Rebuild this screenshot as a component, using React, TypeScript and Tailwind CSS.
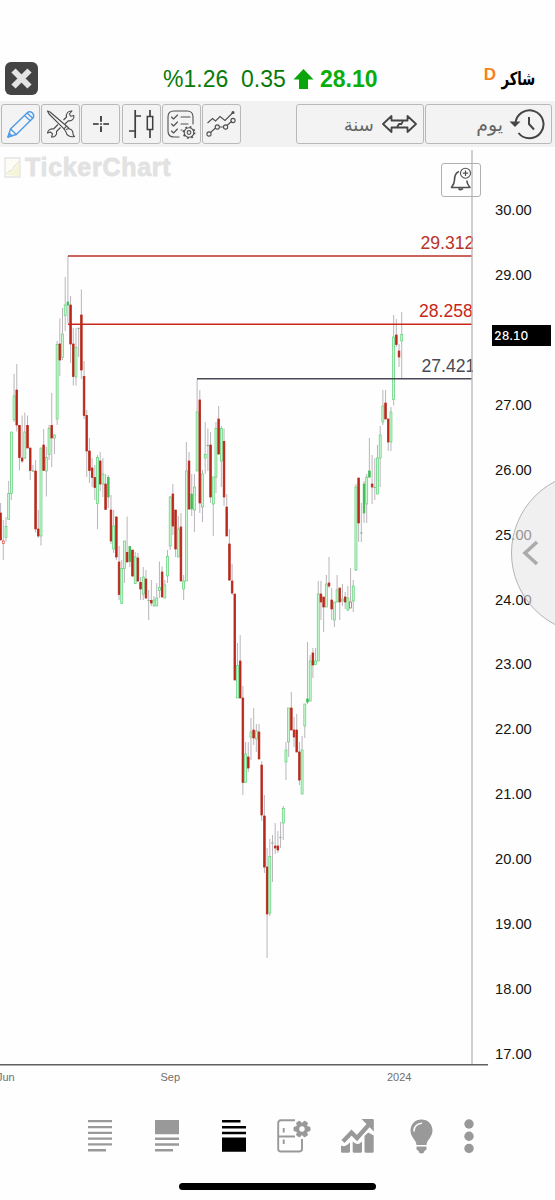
import type { ReactNode } from 'react';

type Kind = 'r' | 'g' | 'G' | 'h' | 'd';

// kind, high, body top, body bottom, low
type Candle = [Kind, number, number, number, number];

// r = falling, g = rising, G = rising filled, h = falling hollow, d = doji
const CANDLES: Candle[] = [
  ['r', 503, 513, 540, 540], ['h', 520, 541, 543.5, 560], ['g', 517, 526.5, 537.5, 541.5],
  ['g', 481, 493.5, 519.5, 519.5], ['g', 432, 432, 493.5, 500], ['g', 374, 396, 419.5, 422],
  ['r', 364, 390, 425, 431.5], ['r', 425, 425.5, 457.5, 470.5], ['r', 415.5, 458, 461, 463],
  ['g', 412.5, 432, 458, 459], ['r', 415.5, 425.5, 448, 448], ['r', 448, 448, 470.5, 480],
  ['d', 465, 470.5, 471.5, 472], ['r', 460, 471, 529, 532.5], ['r', 510, 529, 536, 538],
  ['g', 448, 448, 536, 545.5], ['r', 429, 445, 470.5, 471], ['g', 447, 457.5, 471, 496.5],
  ['g', 425, 428.5, 454.5, 460], ['r', 393, 425.5, 438, 467], ['g', 434, 435, 438, 454],
  ['g', 341, 344.5, 419, 425], ['r', 318.5, 344, 360, 376], ['g', 308, 334, 357.5, 360],
  ['g', 277, 305, 315.5, 331], ['G', 256, 302, 305, 323], ['r', 296, 305, 344, 363],
  ['r', 328, 344, 376.5, 385.5], ['g', 328, 347.5, 377, 385.5], ['d', 327.5, 328, 329, 357],
  ['r', 289.5, 315, 370, 379], ['r', 361, 376.5, 415.5, 419], ['r', 410, 415.5, 451, 477],
  ['r', 438, 451, 470.5, 483], ['r', 458, 468, 477.5, 487], ['r', 465, 477.5, 487.5, 500],
  ['g', 455, 457.5, 503.5, 529], ['r', 452, 461, 484, 491], ['g', 458, 474, 484, 497],
  ['r', 474, 484, 509.5, 510], ['G', 475, 477.5, 497, 508], ['r', 495, 510, 541, 544],
  ['g', 510, 526, 549, 553], ['r', 516, 517, 557, 560], ['r', 546, 562, 594.5, 600],
  ['g', 560, 568.5, 603.5, 604], ['g', 541, 541, 568.5, 583], ['r', 516.5, 552.5, 562, 562],
  ['G', 546, 546.5, 561.5, 567], ['r', 550, 550, 576, 577], ['g', 552, 557, 583.5, 584],
  ['r', 553, 558, 581, 582], ['r', 577, 582.5, 589, 600], ['g', 567, 577, 594, 600],
  ['r', 570, 579, 598, 599], ['d', 590, 600, 601, 620], ['r', 580, 600.5, 603, 606],
  ['g', 596, 600, 605.5, 607], ['g', 583, 598, 606, 606], ['g', 561.5, 587.5, 590.5, 598],
  ['r', 566.5, 572, 597, 597], ['g', 580, 585, 598, 598], ['g', 550, 556.5, 576, 583],
  ['g', 496, 497, 546, 550], ['r', 484, 494, 526, 535], ['r', 510, 510, 549, 557],
  ['g', 516, 529, 557, 557], ['r', 513, 527, 581, 581], ['g', 575, 581, 589, 600],
  ['g', 442, 471, 581, 581], ['r', 452, 461, 509, 510], ['G', 474, 494, 509, 516],
  ['g', 474, 487, 510, 532], ['g', 379, 412, 471, 471], ['r', 390, 400, 503, 513],
  ['g', 470, 474, 507, 522], ['g', 422, 454.5, 458, 474], ['d', 428.5, 445, 446, 471],
  ['r', 432, 445, 497, 503], ['g', 477, 477, 504, 536], ['g', 422, 428.5, 477, 493],
  ['r', 406, 419, 454, 455], ['g', 426, 428.5, 461, 487], ['r', 428.5, 441.5, 497, 506],
  ['r', 494, 507, 536, 536], ['r', 529, 544, 580, 581], ['r', 564, 581, 593, 595],
  ['r', 594, 594, 680, 680], ['g', 643, 665.5, 698, 698], ['r', 635, 661, 698, 698],
  ['r', 686, 698, 782.5, 795], ['g', 742, 754, 782.5, 783], ['r', 742, 757, 768, 772],
  ['g', 718, 732, 737, 760], ['r', 708, 730, 738, 745], ['g', 724, 731, 739, 752],
  ['r', 724, 732, 759, 759], ['r', 761, 765, 815, 821], ['r', 795, 816, 867, 873],
  ['r', 848, 867, 914, 958], ['g', 839, 856.5, 913, 916], ['d', 835, 842.5, 843.5, 882],
  ['r', 823, 846, 848, 854], ['r', 831, 846, 850, 853], ['d', 822, 837, 838, 848],
  ['g', 806, 808.5, 823, 840], ['g', 742, 750, 762, 780], ['g', 708, 708, 742, 757],
  ['r', 692, 708, 730, 730], ['r', 717, 730, 737, 747], ['r', 714, 730, 752, 752],
  ['r', 742, 752, 780, 785], ['g', 736, 750, 794, 794], ['g', 704, 704, 726, 738],
  ['G', 642, 699, 702, 704], ['g', 655, 661, 701, 701], ['r', 648, 653, 665, 678],
  ['g', 648, 661, 664.5, 665], ['g', 581, 594, 661, 661], ['r', 581, 594, 602, 620],
  ['r', 597, 597, 607, 632], ['g', 575, 584, 607, 607], ['r', 557, 583, 586, 588],
  ['r', 588, 600, 609, 620], ['g', 602, 602, 620, 627], ['g', 575, 590, 602, 602],
  ['r', 588, 588, 602, 620], ['g', 584, 599, 601, 606], ['r', 592, 597, 602, 609],
  ['g', 586, 598, 610, 611], ['h', 568, 602, 608, 608], ['g', 580, 586, 601, 612],
  ['g', 484, 487, 570, 571], ['r', 478, 478, 523, 542], ['d', 503, 532.5, 533.5, 542],
  ['G', 481, 484, 513, 523], ['g', 474, 477, 504, 523], ['G', 438, 471, 477, 478],
  ['r', 455, 484, 487, 504], ['d', 458, 487, 488, 500], ['g', 445, 458, 494, 494],
  ['g', 426, 435, 458, 487], ['g', 390, 406, 422, 425], ['r', 390, 403, 419, 419],
  ['r', 419, 419, 442, 451], ['g', 407, 412, 442, 451], ['g', 315, 337, 399.5, 405.5],
  ['r', 319, 335, 344.5, 347], ['r', 344, 351, 357, 367], ['g', 312, 334.5, 341, 379],
];

const BODY: Record<Kind, { fill: string; stroke: string }> = {
  r: { fill: '#b8281a', stroke: '#b8281a' },
  g: { fill: '#cbf7d2', stroke: '#5fd07a' },
  G: { fill: '#3fbb54', stroke: '#3fbb54' },
  h: { fill: '#ffffff', stroke: '#cf4b40' },
  d: { fill: '#85b890', stroke: '#85b890' },
};

const LEVELS = [
  { label: '29.312', x: 68, labelX: 420.5, y: 256, color: '#b83229' },
  { label: '28.258', x: 68, labelX: 419, y: 324.3, color: '#c8261b' },
  { label: '27.421', x: 197, labelX: 421.5, y: 378.7, color: '#484b55' },
];

// 28.00 stays empty, the last price tag covers it
const PRICES = ['30.00', '29.00', '', '27.00', '26.00', '25.00', '24.00', '23.00', '22.00', '21.00', '20.00', '19.00', '18.00', '17.00'];

function Candles() {
  return (
    <g>
      {CANDLES.map(([kind, high, top, bottom, low], i) => {
        const x = 0.6 + i * 2.692;
        const w = kind === 'r' || kind === 'G' ? 1.7 : 2;
        return (
          <g key={i}>
            <line x1={x} x2={x} y1={high} y2={low} stroke="#b3adb3" strokeWidth="0.9" />
            <rect
              x={x - w / 2}
              y={top}
              width={w}
              height={bottom - top}
              fill={BODY[kind].fill}
              stroke={BODY[kind].stroke}
              strokeWidth={kind === 'd' ? 0.2 : 0.7}
            />
          </g>
        );
      })}
    </g>
  );
}

function ToolButton({ children }: { children: ReactNode }) {
  return (
    <button className="flex h-10 w-[39px] shrink-0 items-center justify-center rounded-[3px] border border-[#b9b9b9] bg-[#f3f3f3]">
      {children}
    </button>
  );
}

function PencilIcon() {
  return (
    <svg width="28" height="28" viewBox="0 0 28 28" fill="none" stroke="#4f9be6" strokeWidth="1.4" strokeLinejoin="round">
      <path d="M1 27 3.500 19 20 3Q22.500 .5 25.500 3Q28 6 25.500 8.500L9.300 24.500Z" />
      <path d="m3.500 19 5.800 5.500M17.500 5.500l6 5.500M20 3l6 5.500M1 27l1.300-3.800 2.500 2.500Z" />
    </svg>
  );
}

function ToolsIcon() {
  return (
    <svg width="30" height="30" viewBox="0 0 30 30" fill="none" stroke="#4b4b4b" strokeWidth="1.1" strokeLinejoin="round">
      <path d="M12 15.500 7.500 20c-3-.5-5.500 1-6 4l3-1 2 1.800-1 3.200c3.300.3 5.800-2.200 5-5.500l4-4M17.500 11l3-3c-.8-3.500 2-6.500 5.500-6l-2.700 3 1.500 2.300 3-.8c.8 3.500-2.300 6-5.300 5.200L19 15" />
      <path d="M1.500 2 4 3l16.500 14-2.500 2.800L3 5Z" />
      <path d="m20.500 17 3 3c2.500.3 3.500 2.500 3.500 5 0 1.300 1 2 1.500 2.500-4 .8-8-.5-8.500-4.500l-2-3.200M20 20.500l3-1" />
    </svg>
  );
}

function CrosshairIcon() {
  return (
    <svg width="16" height="16" viewBox="0 0 16 16" stroke="#2c2c2c" strokeWidth="1.7">
      <path d="M8 0v5.700M8 7.200v1.600M8 10.300V16M0 8h5.700M7.200 8h1.600M10.300 8H16" />
    </svg>
  );
}

function BarTypesIcon() {
  return (
    <svg width="26" height="30" viewBox="0 0 26 30" fill="none" stroke="#3f3f3f" strokeWidth="1.7">
      <path d="M7.200 1v28M7 7h6M1 22h6M22 1v6.500M22 20.500V29" />
      <path d="M19.300 7.500h5.400v13h-5.400z" strokeWidth="1.500" />
    </svg>
  );
}

function ChecklistIcon() {
  return (
    <svg width="30" height="30" viewBox="0 0 30 30" fill="none" stroke="#505050" strokeWidth="1.1" strokeLinecap="round" strokeLinejoin="round">
      <path d="M13 28H8Q2 28 2 22V8Q2 2 8 2h13q6 0 6 6v7" />
      <path d="m5.500 8 2 2 4-4M5.500 15l2 2 4-4M5.500 22l2 2 4-4M15 8h9M15 15h7M15 21h1" />
      <circle cx="23" cy="23.500" r="4.800" />
      <circle cx="23" cy="23.500" r="1.900" />
      <circle cx="23" cy="23.500" r="5.600" strokeWidth="1.700" strokeDasharray="1.800 2.600" strokeLinecap="butt" />
    </svg>
  );
}

function TrendsIcon() {
  return (
    <svg width="30" height="28" viewBox="0 0 30 28" fill="none" stroke="#505050" strokeWidth="1.1">
      <path d="m1.500 13 5-4.500 3 2.500 4.500-4.500 5 4L27 2.500" />
      <circle cx="27" cy="2.500" r="1" fill="#505050" />
      <path d="m4.500 22.500 5-4.500M13.500 17h4M21 15.500l5-4.500" />
      <circle cx="3" cy="24" r="2.100" />
      <circle cx="11.300" cy="17" r="2.100" />
      <circle cx="19.600" cy="17" r="2.100" />
      <circle cx="27" cy="10.500" r="2.100" />
    </svg>
  );
}

function RangeIcon() {
  return (
    <svg width="35" height="20" viewBox="0 0 35 20" fill="none" stroke="#454545" strokeWidth="1.800" strokeLinejoin="round">
      <path d="m1 10 8.500-8v4.500h16V2l8.500 8-8.500 8v-4.500h-16V18Z" />
      <path d="m15 13.300 2-3.300h2.500l1.500-3.300" />
    </svg>
  );
}

function HistoryIcon() {
  return (
    <svg width="36" height="32" viewBox="0 0 36 32" fill="none" stroke="#454545" strokeWidth="2">
      <path d="M6.500 15.500a14 14 0 1 1 3 9.500" />
      <path d="M20 9v7l5 5.500" />
      <path d="M.5 13.500h11L6 19Z" fill="#454545" stroke="none" />
    </svg>
  );
}

function BellIcon() {
  return (
    <svg width="24" height="26" viewBox="0 0 24 26" fill="none" stroke="#505050" strokeWidth="1.600" strokeLinejoin="round">
      <path d="M10 4.500C6 6 5.500 9 5.500 13c0 3.500-1.500 5.500-3 7.500h18.500c-1.800-2-3-3.500-3.200-7" />
      <path d="M9.500 21.500q2 2.500 4.500 0" fill="#505050" />
      <circle cx="16.500" cy="6.200" r="5" strokeWidth="1.100" />
      <path d="M13.800 6.200h5.400M16.500 3.500v5.400" strokeWidth="1.200" />
    </svg>
  );
}

function WatermarkIcon() {
  return (
    <svg width="17" height="21" viewBox="0 0 17 21" fill="none">
      <path d="M1 1h15v19H1z" fill="#fdfcf5" stroke="#e3e3e3" strokeWidth="1.300" />
      <path d="m2 18 4-4 3 1 2-5 2-1 2-6v16Z" fill="#f6f4d6" />
      <path d="m2 17 4-4 2 1 2-5 2-1 3-4" stroke="#e2e1da" />
    </svg>
  );
}

function LinesIcon() {
  return (
    <svg width="24" height="34" viewBox="0 0 24 34" fill="#999999">
      <path d="M0 1h24v2.300H0zM0 6.900h24v2.300H0zM0 12.700h24v2.300H0zM0 18.500h24v2.300H0zM0 24.300h24v2.300H0zM0 30.100h18v2.300H0z" />
    </svg>
  );
}

function BlockTopIcon() {
  return (
    <svg width="24" height="34" viewBox="0 0 24 34" fill="#999999">
      <path d="M0 1h24v14.300H0zM0 18.500h24v2.500H0zM0 24.300h24v2.500H0zM0 30.100h18v2.500H0z" />
    </svg>
  );
}

function BlockBottomIcon() {
  return (
    <svg width="24" height="34" viewBox="0 0 24 34" fill="#000000">
      <path d="M0 1h18.500v2.500H0zM0 6.900h24v2.500H0zM0 12.700h24v2.500H0zM0 18.400h24v14.300H0z" />
    </svg>
  );
}

function LayoutGearIcon() {
  return (
    <svg width="34" height="34" viewBox="0 0 34 34" fill="none">
      <path d="M18 1.200H4Q1.200 1.200 1.200 4v26q0 2.500 2.800 2.500h18q3 0 3-2.500V20M1.500 17.500h16.500M6.700 9v4.500M6.700 20.500V25" stroke="#999999" strokeWidth="1.900" />
      <g fill="#999999">
        <circle cx="25" cy="10" r="6.500" />
        <rect x="16.500" y="7.500" width="17" height="5" rx="1.400" />
        <rect x="16.500" y="7.500" width="17" height="5" rx="1.400" transform="rotate(60 25 10)" />
        <rect x="16.500" y="7.500" width="17" height="5" rx="1.400" transform="rotate(120 25 10)" />
      </g>
      <circle cx="25" cy="10" r="2.700" fill="#ffffff" />
    </svg>
  );
}

function GrowthIcon() {
  return (
    <svg width="33" height="34" viewBox="0 0 33 34" fill="#999999">
      <path d="M0 26.500Q3.500 28 6 26l3-2.500v8.800q0 1.500-1.500 1.500h-6Q0 33.800 0 32.300ZM11.700 22.500l2 1.500q2.500 1.500 5 .5l2.300-2v9.800q0 1.500-1.500 1.500h-6.300q-1.500 0-1.500-1.500ZM23.500 17l3.700-3.500 5.500 3v15.800q0 1.500-1.500 1.500H25q-1.500 0-1.500-1.500Z" />
      <path d="m2 22.500 8.500-9 5.500 5.500L28.500 5" fill="none" stroke="#999999" strokeWidth="4.300" />
      <path d="M20.500 0h11q1.300 0 1.300 1.300v11.200Z" />
    </svg>
  );
}

function BulbIcon() {
  return (
    <svg width="23" height="35" viewBox="0 0 23 35">
      <path d="M11.500.5C5 .5.500 5.300.500 11.500c0 6.500 5.500 9 6 14.500h10c.5-5.500 6-8 6-14.500C22.500 5.300 18 .5 11.500.5ZM6.500 27.500h10v3l-2 1.500q-.5 2.500-3 2.500t-3-2.500l-2-1.500Z" fill="#999999" />
      <path d="M4 12Q4.200 5.200 11.500 4.200" fill="none" stroke="#ffffff" strokeWidth="1.500" strokeLinecap="round" />
    </svg>
  );
}

function MoreIcon() {
  return (
    <svg width="10" height="36" viewBox="0 0 10 36" fill="#999999">
      <circle cx="5" cy="5" r="4.700" />
      <circle cx="5" cy="17.200" r="4.700" />
      <circle cx="5" cy="29.400" r="4.700" />
    </svg>
  );
}

export default function App() {
  return (
    <div className="flex h-[1200px] w-[555px] flex-col overflow-hidden bg-[#fefefe] font-['Liberation_Sans',Arial,sans-serif]">
      <header className="flex h-[101px] shrink-0 items-end pb-1.5 pl-[5px] pr-5">
        <button className="flex size-[33px] items-center justify-center rounded-md bg-[#444444]">
          <svg width="21" height="21" viewBox="0 0 21 21" stroke="#e4e4e4" strokeWidth="6">
            <path d="m2.500 2.500 16 16M18.500 2.500l-16 16" />
          </svg>
        </button>
        <div className="ml-[125px] flex h-[33px] items-center whitespace-nowrap pt-0.5 text-[23px] leading-none text-[#087a08]">
          <span className="w-[78px]">%1.26</span>
          <span className="w-[52px]">0.35</span>
          <svg width="21" height="21" viewBox="0 0 21 21" fill="#0aa50a">
            <path d="M10.500 0 20.500 10.500H15V20H6V10.500H.5Z" />
          </svg>
          <span className="ml-1.5 font-bold text-[#0aae0a]">28.10</span>
        </div>
        <div className="ml-auto flex h-[33px] items-center" dir="rtl">
          <span className="w-[33px] whitespace-nowrap font-['DejaVu_Sans',sans-serif] text-[18px] font-bold leading-none text-black">
            <span className="inline-block origin-right scale-x-[0.73]">شاكر</span>
          </span>
          <span className="mb-2 mr-1.5 text-[17px] font-bold leading-none text-[#f5821f]">D</span>
        </div>
      </header>

      <div className="flex h-[46px] shrink-0 items-center gap-[1.200px] bg-[#f2f2f2] pl-[1px] pr-[3px]">
        <ToolButton><PencilIcon /></ToolButton>
        <ToolButton><ToolsIcon /></ToolButton>
        <ToolButton><CrosshairIcon /></ToolButton>
        <ToolButton><BarTypesIcon /></ToolButton>
        <ToolButton><ChecklistIcon /></ToolButton>
        <ToolButton><TrendsIcon /></ToolButton>
        <button className="ml-auto flex h-10 w-32 items-center justify-end gap-2 rounded-[3px] border border-[#b9b9b9] bg-[#f3f3f3] pr-1.5 font-['DejaVu_Sans',sans-serif] text-[18px] text-[#666666]">
          <span>سنة</span>
          <RangeIcon />
        </button>
        <button className="flex h-10 w-[127px] items-center justify-end gap-1.5 rounded-[3px] border border-[#b9b9b9] bg-[#f3f3f3] pr-1.5 font-['DejaVu_Sans',sans-serif] text-[19px] text-[#666666]">
          <span>يوم</span>
          <HistoryIcon />
        </button>
      </div>

      <main className="relative flex h-[943px] shrink-0 overflow-hidden">
        <svg className="shrink-0" width="490" height="943" viewBox="0 147 490 943">
          <defs>
            <clipPath id="plot">
              <rect x="0" y="147" width="473" height="918" />
            </clipPath>
          </defs>
          <g clipPath="url(#plot)">
            <Candles />
            {LEVELS.map((l) => (
              <g key={l.label}>
                <line x1={l.x} x2="472" y1={l.y} y2={l.y} stroke={l.color} strokeWidth="1.500" />
                <text x={l.labelX} y={l.y - 7.200} fontSize="17.600" fill={l.color}>{l.label}</text>
              </g>
            ))}
          </g>
          <line x1="472" x2="472" y1="150" y2="1065" stroke="#b5b5b5" strokeWidth="1.300" />
          <line x1="0" x2="488" y1="1064.700" y2="1064.700" stroke="#606060" strokeWidth="1.500" />
          <g fontSize="11" fill="#707070">
            <text x="-3" y="1081">Jun</text>
            <text x="160.500" y="1081">Sep</text>
            <text x="387" y="1081">2024</text>
          </g>
        </svg>

        <div className="flex flex-col pl-[5px] pt-[31px] text-[14.700px] text-[#151515]">
          {PRICES.map((p, i) => (
            <div key={i} className="flex h-[64.920px] shrink-0 items-center leading-none">{p}</div>
          ))}
        </div>
        <div className="absolute left-[492px] top-[178px] flex h-[21px] w-[59px] items-center bg-black pl-0.5 pt-px font-['Inter',sans-serif] text-[12px] font-medium tabular-nums text-white">
          28.10
        </div>

        <div className="absolute left-1 top-2 flex items-center gap-1">
          <WatermarkIcon />
          <span className="text-[25px] font-bold leading-6 tracking-[0.700px] text-[#e2e2e2] [-webkit-text-stroke:0.800px_#e2e2e2]">TickerChart</span>
        </div>
        <button className="absolute left-[441px] top-[16px] flex h-[34px] w-10 items-center justify-center rounded-[3px] border border-[#b0b0b0]">
          <BellIcon />
        </button>
        <div className="absolute left-[511px] top-[325px] flex size-[162px] items-center rounded-full border border-[#b5b5b5] bg-[#e6e6e6]/60 pl-2.5">
          <svg width="17" height="26" viewBox="0 0 17 26" fill="none" stroke="#ababab" strokeWidth="3.600">
            <path d="M15 2 3 13l12 11" />
          </svg>
        </div>
      </main>

      <nav className="flex h-[93px] shrink-0 items-start pl-[88px] pt-[29px]">
        <LinesIcon />
        <span className="ml-[43px]"><BlockTopIcon /></span>
        <span className="ml-[43px]"><BlockBottomIcon /></span>
        <span className="ml-[31px]"><LayoutGearIcon /></span>
        <span className="ml-[30px]"><GrowthIcon /></span>
        <span className="ml-[36px]"><BulbIcon /></span>
        <span className="ml-[31px]"><MoreIcon /></span>
      </nav>
      <div className="ml-[179px] h-[7px] w-[197px] shrink-0 rounded-full bg-black" />
    </div>
  );
}
